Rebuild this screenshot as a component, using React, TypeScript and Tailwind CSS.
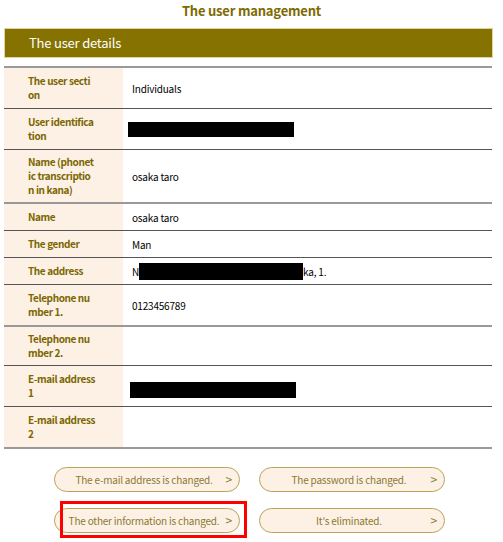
const rows: { label: string[]; value: React.ReactNode; heavy?: boolean; tight?: boolean }[] = [
  { label: ["The user secti", "on"], value: "Individuals" },
  {
    label: ["User identifica", "tion"],
    value: <span className="block h-[15px] w-[166px] bg-black -ml-[4px]" />,
  },
  { label: ["Name (phonet", "ic transcriptio", "n in kana)"], value: "osaka taro", heavy: true, tight: true },
  { label: ["Name"], value: "osaka taro" },
  { label: ["The gender"], value: "Man" },
  {
    label: ["The address"],
    value: (
      <span className="flex items-center">
        N<span className="inline-block h-[17px] w-[164px] bg-black" />
        ka, 1.
      </span>
    ),
  },
  { label: ["Telephone nu", "mber 1."], value: "0123456789", heavy: true },
  { label: ["Telephone nu", "mber 2."], value: "", tight: true },
  {
    label: ["E-mail address", "1"],
    value: <span className="block h-[16px] w-[166px] bg-black -ml-[2px] mt-[8px]" />,
  },
  { label: ["E-mail address", "2"], value: "", heavy: true },
];

const buttons = [
  "The e-mail address is changed.",
  "The password is changed.",
  "The other information is changed.",
  "It's eliminated.",
];

export default function App() {
  return (
    <div
      className="relative w-[503px] h-[542px] bg-white overflow-hidden"
      style={{ fontFamily: '"Noto Sans CJK JP", "Noto Sans", sans-serif' }}
    >
      {/* Title */}
      <div className="h-[28px] pt-[2px] text-center text-[13px] leading-[18px] tracking-[-0.2px] font-bold text-[#7d6a00]">
        The user management
      </div>

      {/* Header bar */}
      <div className="mx-[4px] w-[489px] h-[30px] bg-[#857200] border border-[#e3d39c] flex items-center pl-[24px] text-[13px] tracking-[-0.2px] text-white">
        The user details
      </div>

      {/* Details table */}
      <div className="mx-[4px] w-[488px] mt-[8px] border-t-2 border-[#999]">
        {rows.map((r, i) => (
          <div
            key={i}
            className={
              "flex " +
              (r.heavy ? "border-b-2 border-[#999]" : "border-b border-[#555]")
            }
          >
            <div
              className={
                "w-[119px] shrink-0 bg-[#fdf1e6] pl-[24px] text-[10px] leading-[14px] tracking-[-0.4px] font-bold text-[#7b6700] whitespace-nowrap " +
                (r.tight ? "py-[5px]" : "py-[6px]")
              }
            >
              {r.label.map((l) => (
                <div key={l}>{l}</div>
              ))}
            </div>
            <div className="flex-1 pl-[9px] flex items-center text-[10px] tracking-[-0.2px] text-black">
              {r.value}
            </div>
          </div>
        ))}
      </div>

      {/* Buttons */}
      <div className="mt-[18px] ml-[54px] grid grid-cols-[186px_186px] gap-x-[19px] gap-y-[16px]">
        {buttons.map((b) => (
          <button
            key={b}
            className="relative h-[25px] rounded-full border border-[#b9a45a] bg-[#fdf1e6] text-[10px] tracking-[-0.2px] text-[#8a7a30] text-center pr-[6px]"
          >
            {b}
            <span className="absolute right-[7px] top-[3px] text-[12px] leading-[16px]">&gt;</span>
          </button>
        ))}
      </div>

      {/* Highlight annotation */}
      <div className="absolute left-[60px] top-[501px] w-[187px] h-[37px] border-[3px] border-[#ff0000]" />
    </div>
  );
}
